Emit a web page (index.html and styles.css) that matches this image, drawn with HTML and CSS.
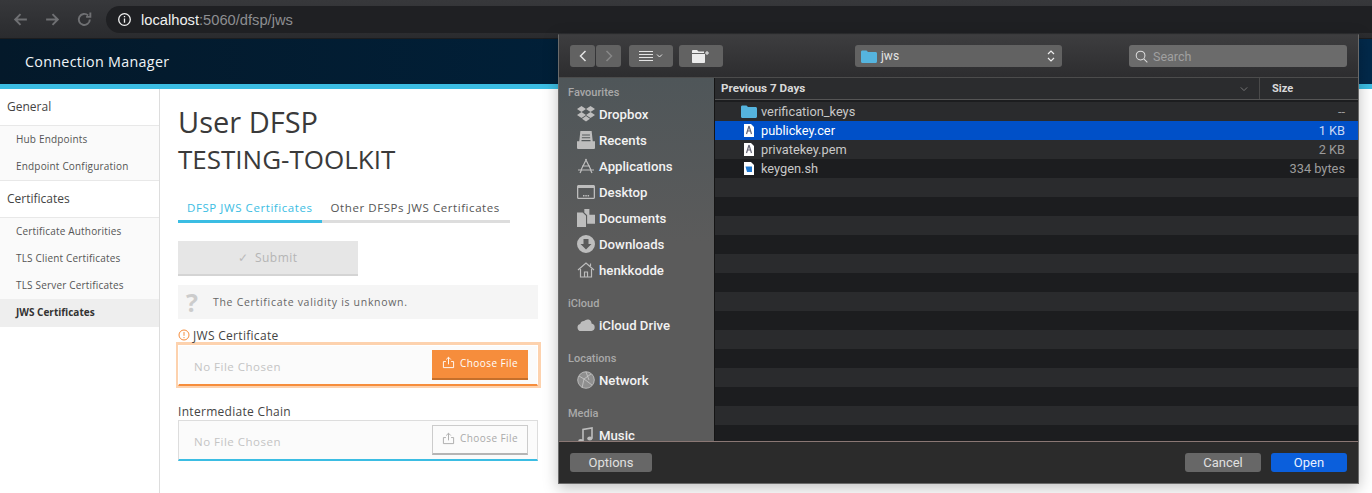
FILE: index.html
```html
<!DOCTYPE html>
<html lang="en">
<head>
    <meta charset="UTF-8">
    <title>Connection Manager</title>
    <link rel="stylesheet" href="styles.css">
</head>
<body>

    <!-- browser toolbar -->
    <div class="browser-bar">
        <div class="nav-icons">
            <svg viewBox="0 0 16 16" class="nav-icon"><path d="M14 8H3M8 3L3 8l5 5"/></svg>
            <svg viewBox="0 0 16 16" class="nav-icon"><path d="M2 8h11M8 3l5 5-5 5"/></svg>
            <svg viewBox="0 0 16 16" class="nav-icon"><path d="M13 8a5.2 5.2 0 1 1-1.6-3.8M13.500 1.500v4h-4"/></svg>
        </div>
        <div class="omnibox">
            <svg viewBox="0 0 16 16" class="info-icon"><circle cx="8" cy="8" r="6.200"/><path d="M8 7v4.500M8 4.200v1.500"/></svg>
            <span class="url-host">localhost</span><span class="url-rest">:5060/dfsp/jws</span>
        </div>
    </div>

    <header class="app-header">
        <span class="app-title">Connection Manager</span>
    </header>

    <div class="app-body">
        <nav class="sidebar">
            <div class="side-heading">General</div>
            <div class="side-group">
                <a class="side-link">Hub Endpoints</a>
                <a class="side-link">Endpoint Configuration</a>
            </div>
            <div class="side-heading">Certificates</div>
            <div class="side-group">
                <a class="side-link">Certificate Authorities</a>
                <a class="side-link">TLS Client Certificates</a>
                <a class="side-link">TLS Server Certificates</a>
                <a class="side-link active">JWS Certificates</a>
            </div>
        </nav>

        <main class="content">
            <h1>User DFSP</h1>
            <h2>TESTING-TOOLKIT</h2>

            <div class="tabs">
                <div class="tab active">DFSP JWS Certificates</div>
                <div class="tab">Other DFSPs JWS Certificates</div>
            </div>

            <button class="submit-btn" type="button"><span class="check">✓</span>Submit</button>

            <div class="validity">
                <span class="question">?</span>
                <span>The Certificate validity is unknown.</span>
            </div>

            <div class="field-label first">
                <svg viewBox="0 0 12 12" class="warn-icon"><circle cx="6" cy="6" r="5"/><path d="M6 3v3.800M6 8v1.200"/></svg>
                JWS Certificate
            </div>
            <div class="file-focus">
                <div class="file-box pending">
                    <span class="no-file">No File Chosen</span>
                    <button class="choose-btn primary" type="button">
                        <svg viewBox="0 0 14 14" class="upload-icon"><path d="M7 9V1.500M4.500 3.800L7 1.300l2.500 2.500M4.200 6H1.500v6.500h11V6H9.800"/></svg>
                        Choose File
                    </button>
                </div>
            </div>

            <div class="field-label second">Intermediate Chain</div>
            <div class="file-box">
                <span class="no-file">No File Chosen</span>
                <button class="choose-btn" type="button">
                    <svg viewBox="0 0 14 14" class="upload-icon"><path d="M7 9V1.500M4.500 3.800L7 1.300l2.500 2.500M4.200 6H1.500v6.500h11V6H9.800"/></svg>
                    Choose File
                </button>
            </div>
        </main>
    </div>

    <!-- macOS open dialog, sits over the page -->
    <div class="dialog">
        <div class="dlg-toolbar">
            <div class="seg">
                <div class="tool-btn back"><svg viewBox="0 0 10 14"><path d="M7.500 2L2.500 7l5 5"/></svg></div>
                <div class="tool-btn back dim"><svg viewBox="0 0 10 14"><path d="M2.500 2l5 5-5 5"/></svg></div>
            </div>
            <div class="tool-btn wide">
                <svg viewBox="0 0 24 12" class="list-glyph"><path d="M0 1.500h14M0 4.500h14M0 7.500h14M0 10.500h14M18 4.500l2.500 2.500L23 4.500"/></svg>
            </div>
            <div class="tool-btn wide">
                <svg viewBox="0 0 18 13" class="newfolder"><path d="M0 3V1.200C0 .5.500 0 1 0h4l1.500 1.500H12V3zM0 4h13v8.200c0 .4-.4.8-.8.8H.8c-.4 0-.8-.4-.8-.8z"/><path d="M15 1v4M13 3h4" class="plus"/></svg>
            </div>
            <div class="path-select">
                <svg viewBox="0 0 16 13" class="folder-glyph"><path d="M0 2C0 1 .6.500 1.500.500h4L7 2h7.500c.9 0 1.500.6 1.500 1.500V11.500c0 .9-.6 1.500-1.500 1.500h-13C.6 13 0 12.400 0 11.500z"/></svg>
                <span>jws</span>
                <svg viewBox="0 0 8 14" class="updown"><path d="M1 5l3-3 3 3M1 9l3 3 3-3"/></svg>
            </div>
            <div class="search-box">
                <svg viewBox="0 0 14 14" class="search-glyph"><circle cx="6" cy="6" r="4.700"/><path d="M9.500 9.500l3.800 3.800"/></svg>
                <span>Search</span>
            </div>
        </div>

        <div class="dlg-main">
            <aside class="dlg-side">
                <div class="place-heading top">Favourites</div>
                <div class="place">
                    <svg viewBox="0 0 18 16" class="place-icon"><path d="M4.500 0L0 3l4.500 3L9 3zM13.500 0L9 3l4.500 3L18 3zM4.500 6L0 9l4.500 3L9 9zM13.500 6L9 9l4.500 3L18 9zM9 10l-4 2.700L9 15.500l4-2.800z"/></svg>
                    Dropbox
                </div>
                <div class="place">
                    <svg viewBox="0 0 16 16" class="place-icon"><path d="M3 0h10l1 9h2v6a1 1 0 0 1-1 1H1a1 1 0 0 1-1-1V9h2zM4.500 3v1h7V3zM4.300 5.500v1h7.400v-1zM4 8v1h8V8z" fill-rule="evenodd"/></svg>
                    Recents
                </div>
                <div class="place">
                    <svg viewBox="0 0 18 16" class="place-icon line"><path d="M9.500 1L4 12M8.500 1L14 12M1 12h16M5 8h8M3 15l1.500-3M15 15l-1.500-3"/></svg>
                    Applications
                </div>
                <div class="place">
                    <svg viewBox="0 0 18 14" class="place-icon"><path d="M1.500 0h15c.8 0 1.500.7 1.500 1.500v11c0 .8-.7 1.500-1.500 1.500h-15C.7 14 0 13.300 0 12.500v-11C0 .7.700 0 1.500 0zM1.300 3v9.700h15.400V3zM6 10h1.500v1.500H6zM8.300 10h1.500v1.500H8.300zM10.600 10h1.500v1.500h-1.500z" fill-rule="evenodd"/></svg>
                    Desktop
                </div>
                <div class="place">
                    <svg viewBox="0 0 16 16" class="place-icon"><path d="M0 3h5l3 3v10H0zM6.500 0H11v5l5 0v8H9V5.500L6.500 3z"/></svg>
                    Documents
                </div>
                <div class="place">
                    <svg viewBox="0 0 18 18" class="place-icon"><path d="M9 0a9 9 0 1 1 0 18A9 9 0 0 1 9 0zM6.500 4v5H3.500L9 14.500 14.500 9h-3V4z" fill-rule="evenodd"/></svg>
                    Downloads
                </div>
                <div class="place">
                    <svg viewBox="0 0 18 16" class="place-icon line"><path d="M1 8l8-7 8 7M3.500 7v8h11V7M7.500 15v-5h3v5M13.500 4V1.500"/></svg>
                    henkkodde
                </div>
                <div class="place-heading">iCloud</div>
                <div class="place">
                    <svg viewBox="0 0 18 12" class="place-icon"><path d="M4 12a3.500 3.500 0 0 1-.8-6.900A4 4 0 0 1 7 2a5 5 0 0 1 4.500-1.500c2 .4 3 2 3 4A3.800 3.800 0 0 1 14.500 12z"/></svg>
                    iCloud Drive
                </div>
                <div class="place-heading">Locations</div>
                <div class="place">
                    <svg viewBox="0 0 18 18" class="place-icon globe"><circle cx="9" cy="9" r="8.300"/><path d="M2 5l5 3 7-5M7 8l-2 9M7 8l8 6M9 1l3 8"/></svg>
                    Network
                </div>
                <div class="place-heading">Media</div>
                <div class="place">
                    <svg viewBox="0 0 18 18" class="place-icon note"><path d="M6 15V3.500l9-1.500v10.500"/><ellipse cx="3.800" cy="15" rx="2.600" ry="2" class="note-head"/><ellipse cx="12.800" cy="12.500" rx="2.600" ry="2" class="note-head"/></svg>
                    Music
                </div>
            </aside>

            <section class="dlg-files">
                <div class="file-header">
                    <div class="col-name">
                        Previous 7 Days
                        <svg viewBox="0 0 10 6" class="sort-glyph"><path d="M1 1l4 4 4-4"/></svg>
                    </div>
                    <div class="col-size">Size</div>
                </div>
                <div class="file-rows">
                    <div class="file-row">
                        <svg viewBox="0 0 16 13" class="row-folder"><path d="M0 2C0 1 .6.500 1.500.500h4L7 2h7.500c.9 0 1.500.6 1.500 1.500V11.500c0 .9-.6 1.500-1.500 1.500h-13C.6 13 0 12.400 0 11.500z"/></svg>
                        <span class="row-name">verification_keys</span><span class="row-size">--</span>
                    </div>
                    <div class="file-row selected">
                        <svg viewBox="0 0 10 13" class="row-doc"><path d="M0 0h7l3 3v10H0z" fill="#fff"/><path d="M5 2L2.500 10M5 2l2.500 8M3 7h4" class="cert"/></svg>
                        <span class="row-name">publickey.cer</span><span class="row-size">1 KB</span>
                    </div>
                    <div class="file-row">
                        <svg viewBox="0 0 10 13" class="row-doc"><path d="M0 0h7l3 3v10H0z" fill="#fff"/><path d="M5 2L2.500 10M5 2l2.500 8M3 7h4" class="cert"/></svg>
                        <span class="row-name">privatekey.pem</span><span class="row-size">2 KB</span>
                    </div>
                    <div class="file-row">
                        <svg viewBox="0 0 10 13" class="row-doc"><path d="M0 0h7l3 3v10H0z" fill="#fff"/><path d="M1.500 4.500h6.500v5.500H3z" fill="#1f78d0"/></svg>
                        <span class="row-name">keygen.sh</span><span class="row-size">334 bytes</span>
                    </div>
                </div>
            </section>
        </div>

        <div class="dlg-footer">
            <button class="mac-btn" type="button">Options</button>
            <div class="footer-right">
                <button class="mac-btn" type="button">Cancel</button>
                <button class="mac-btn open" type="button">Open</button>
            </div>
        </div>
    </div>

</body>
</html>
```

FILE: styles.css
```css
* {
    box-sizing: border-box;
}

body {
    margin: 0;
    height: 493px;
    overflow: hidden;
    background-color: #fff;
    color: #333;
    font-family: "Open Sans", "Noto Sans", sans-serif;
    position: relative;
}

/* browser bar */
.browser-bar {
    height: 39px;
    display: flex;
    align-items: flex-start;
    padding: 6px 0 0 12px;
    background: linear-gradient(#37383b, #2a2b2e);
    border-bottom: 1px solid #1c1d1f;
}

.nav-icons {
    display: flex;
    gap: 15px;
    width: 94px;
    padding-top: 5px;
}

.nav-icon {
    width: 17px;
    height: 17px;
    fill: none;
    stroke: #6f7073;
    stroke-width: 1.800;
}

.omnibox {
    flex: 1;
    height: 27px;
    display: flex;
    align-items: center;
    padding-left: 11px;
    border-radius: 14px 0 0 14px;
    background-color: #1f2023;
    font-family: "Liberation Sans", sans-serif;
    font-size: 14.700px;
}

.info-icon {
    width: 15px;
    height: 15px;
    margin-right: 9px;
    fill: none;
    stroke: #f1f1f1;
    stroke-width: 1.400;
}

.url-host {
    color: #f0f0f0;
}

.url-rest {
    color: #8d8e91;
}

/* app header */
.app-header {
    height: 50px;
    display: flex;
    align-items: center;
    padding: 0 0 0 25px;
    background: linear-gradient(90deg, #04192a, #00213b 50%, #03294a);
    border-bottom: 5px solid #3bbde3;
}

.app-title {
    color: #f0f4f7;
    font-size: 14.300px;
    letter-spacing: 0.300px;
}

.app-body {
    display: grid;
    grid-template-columns: 160px 1fr;
    height: 404px;
}

/* left nav */
.sidebar {
    border-right: 1px solid #ddd;
    background-color: #fff;
}

.side-heading {
    height: 37px;
    padding: 0 0 2px 7px;
    display: flex;
    align-items: center;
    font-size: 12px;
    color: #444;
    border-bottom: 1px solid #e8e8e8;
}

.side-group {
    padding: 0;
    background-color: #fafafa;
    border-bottom: 1px solid #e8e8e8;
}

.side-group:last-child {
    border-bottom: none;
    padding-top: 0;
}

.side-link {
    display: flex;
    align-items: center;
    height: 27px;
    padding: 0 0 2px 16px;
    font-size: 10px;
    letter-spacing: 0.180px;
    color: #555;
}

.side-link.active {
    height: 28px;
    background-color: #eee;
    color: #333;
    font-weight: 700;
    letter-spacing: 0;
}

/* main column */
.content {
    padding: 14px 0 0 18px;
}

h1 {
    margin: 0;
    height: 37px;
    font-size: 29px;
    line-height: 37px;
    font-weight: 400;
    color: #3a3a3a;
}

h2 {
    margin: 0;
    height: 39px;
    font-size: 26px;
    line-height: 38px;
    font-weight: 400;
    color: #3a3a3a;
}

.tabs {
    display: flex;
    width: 332px;
    height: 27px;
    margin-top: 17px;
    border-bottom: 3px solid #ddd;
}

.tab {
    height: 27px;
    padding: 0 9px;
    font-size: 11.500px;
    line-height: 24px;
    letter-spacing: 0.570px;
    color: #555;
}

.tab.active {
    color: #3bbde3;
    border-bottom: 3px solid #3bbde3;
}

.submit-btn {
    display: flex;
    align-items: center;
    justify-content: center;
    width: 180px;
    height: 35px;
    margin-top: 18px;
    padding: 0;
    border: none;
    border-bottom: 2px solid #d4d4d4;
    background-color: #e6e6e6;
    color: #b5b5b5;
    font-family: inherit;
    font-size: 12px;
    letter-spacing: 0.500px;
}

.check {
    margin-right: 6px;
    color: #bbb;
}

.validity {
    display: flex;
    align-items: center;
    width: 360px;
    height: 34px;
    margin-top: 9px;
    background-color: #f5f5f5;
    font-size: 10.500px;
    letter-spacing: 0.700px;
    color: #666;
}

.question {
    width: 35px;
    padding-left: 8px;
    font-size: 25px;
    line-height: 30px;
    font-weight: 700;
    color: #ccc;
}

.field-label {
    display: flex;
    align-items: center;
    height: 16px;
    font-size: 12px;
    letter-spacing: 0.300px;
    color: #444;
}

.field-label.first {
    margin-top: 8px;
}

.field-label.second {
    margin-top: 15px;
    margin-bottom: 1px;
}

.warn-icon {
    width: 12px;
    height: 12px;
    margin-right: 3px;
    fill: none;
    stroke: #f68d3c;
    stroke-width: 1;
}

.file-focus {
    width: 365px;
    height: 46px;
    margin: -1px 0 0 -2px;
    padding: 3px 3px 2px 2px;
    background-color: #fdd2ae;
}

.file-box {
    width: 360px;
    height: 41px;
    display: flex;
    align-items: center;
    justify-content: space-between;
    padding: 0 9px 0 15px;
    background-color: #fbfbfb;
    border: 1px solid #ddd;
    border-bottom: 2px solid #3bbde3;
}

.file-box.pending {
    border-color: #fff;
    border-bottom-color: #f68d3c;
}

.no-file {
    font-size: 11.500px;
    letter-spacing: 0.500px;
    color: #c4c4c4;
    padding-top: 3px;
}

.choose-btn {
    display: flex;
    align-items: center;
    justify-content: center;
    gap: 5px;
    width: 96px;
    height: 30px;
    margin-top: -1px;
    padding: 0 0 2px;
    background-color: #fbfbfb;
    border: 1px solid #ccc;
    border-bottom: 2px solid #b5b5b5;
    color: #aaa;
    font-family: inherit;
    font-size: 10px;
    letter-spacing: 0.420px;
}

.choose-btn.primary {
    background-color: #f68d3c;
    border: none;
    border-bottom: 2px solid #c56f2b;
    color: #fff;
}

.upload-icon {
    width: 13px;
    height: 13px;
    fill: none;
    stroke: currentColor;
    stroke-width: 1;
}

/* file dialog */
.dialog {
    position: absolute;
    left: 558px;
    top: 34px;
    width: 801px;
    height: 450px;
    display: flex;
    flex-direction: column;
    border: 1px solid #6a6a6a;
    border-top-color: #3a3a3c;
    background-color: #2b2b2b;
    box-shadow: 0 4px 14px rgba(0, 0, 0, 0.25);
    font-family: "Roboto", "Liberation Sans", sans-serif;
}

.dlg-toolbar {
    height: 43px;
    display: flex;
    align-items: center;
    flex-shrink: 0;
    padding: 0 11px;
    background: linear-gradient(#3d3d3f, #2d2d2f);
    border-bottom: 1px solid #4c4c4c;
}

.seg {
    display: flex;
    gap: 1px;
    margin-right: 8px;
}

.tool-btn {
    display: flex;
    align-items: center;
    justify-content: center;
    height: 22px;
    border-radius: 3px;
    background-color: #626262;
}

.tool-btn.back {
    width: 25px;
}

.tool-btn.back svg {
    width: 10px;
    height: 14px;
    fill: none;
    stroke: #e4e4e4;
    stroke-width: 1.500;
}

.tool-btn.dim svg {
    stroke: #888;
}

.tool-btn.wide {
    width: 44px;
    margin-right: 6px;
}

.list-glyph {
    width: 24px;
    height: 12px;
    fill: none;
    stroke: #e4e4e4;
    stroke-width: 1;
}

.newfolder {
    width: 18px;
    height: 13px;
    fill: #ececec;
}

.newfolder .plus {
    fill: none;
    stroke: #ececec;
}

.path-select {
    display: flex;
    align-items: center;
    width: 207px;
    height: 22px;
    margin-left: 126px;
    padding: 0 7px 0 6px;
    border-radius: 3px;
    background-color: #626262;
    color: #e4e4e4;
    font-size: 12px;
}

.folder-glyph {
    width: 16px;
    height: 13px;
    margin-right: 4px;
    fill: #55b4de;
}

.updown {
    width: 8px;
    height: 14px;
    margin-left: auto;
    fill: none;
    stroke: #eee;
    stroke-width: 1.200;
}

.search-box {
    display: flex;
    align-items: center;
    width: 218px;
    height: 22px;
    margin-left: 67px;
    padding-left: 6px;
    border-radius: 3px;
    background-color: #6b6b6b;
    color: #a0a0a0;
    font-size: 12.500px;
}

.search-glyph {
    width: 13px;
    height: 13px;
    margin-right: 5px;
    fill: none;
    stroke: #ddd;
    stroke-width: 1.100;
}

.dlg-main {
    flex: 1;
    display: flex;
    min-height: 0;
    overflow: hidden;
}

.dlg-side {
    width: 156px;
    flex-shrink: 0;
    overflow: hidden;
    padding-left: 9px;
    background: linear-gradient(#4f5659, #5b5b5b 45%);
    border-right: 1px solid #151515;
}

.place-heading {
    height: 16px;
    margin-top: 13px;
    font-size: 11px;
    line-height: 16px;
    font-weight: 500;
    color: #a9a9a9;
}

.place-heading.top {
    margin-top: 7px;
}

.place {
    display: flex;
    align-items: center;
    height: 26px;
    padding-left: 9px;
    font-size: 13.200px;
    font-weight: 500;
    color: #f2f2f2;
}

.place-icon {
    width: 18px;
    height: 18px;
    margin-right: 4px;
    flex-shrink: 0;
    fill: #bdbdbd;
}

.place-icon.line {
    fill: none;
    stroke: #bdbdbd;
    stroke-width: 1.200;
}

.place-icon.globe {
    fill: #8f8f8f;
    stroke: #c9c9c9;
    stroke-width: 0.800;
}

.place-icon.note {
    fill: none;
    stroke: #bdbdbd;
    stroke-width: 1.600;
}

.note-head {
    fill: #bdbdbd;
    stroke: none;
}

.dlg-files {
    flex: 1;
    min-width: 0;
    background-color: #1c1d1f;
}

.file-header {
    display: flex;
    height: 22px;
    background-color: #2b2c2e;
    border-bottom: 1px solid #555;
    color: #d9d9d9;
    font-size: 11.700px;
    font-weight: 700;
    line-height: 21px;
}

.col-name {
    display: flex;
    align-items: center;
    justify-content: space-between;
    width: 545px;
    padding: 0 11px 0 6px;
    border-right: 1px solid #4a4a4a;
}

.sort-glyph {
    width: 8px;
    height: 6px;
    fill: none;
    stroke: #888;
}

.col-size {
    padding-left: 12px;
    font-size: 11px;
}

/* striped rows, 19px each */
.file-rows {
    height: 342px;
    padding-top: 2px;
    background: repeating-linear-gradient(#1c1d1f 0 2px, #2a2b2d 2px 21px, #1c1d1f 21px 38px);
}

.file-row {
    display: flex;
    align-items: center;
    height: 19px;
    color: #c8c8c8;
    font-size: 12.800px;
}

.file-row.selected {
    background-color: #0050c8;
    color: #fff;
}

.row-folder {
    width: 16px;
    height: 13px;
    margin-left: 26px;
    margin-right: 4px;
    fill: #55b4de;
}

.row-doc {
    width: 10px;
    height: 13px;
    margin-left: 29px;
    margin-right: 7px;
}

.cert {
    fill: none;
    stroke: #667;
    stroke-width: 1.200;
}

.row-name {
    flex: 1;
}

.row-size {
    padding-right: 13px;
    color: #9c9c9c;
}

.selected .row-size {
    color: #c8d8f4;
}

.dlg-footer {
    height: 42px;
    flex-shrink: 0;
    display: flex;
    align-items: center;
    justify-content: space-between;
    padding: 0 11px;
    background-color: #2b2b2b;
    border-top: 1px solid #8a7774;
}

.footer-right {
    display: flex;
    gap: 10px;
}

.mac-btn {
    width: 82px;
    height: 19px;
    padding: 0;
    border: none;
    border-radius: 3px;
    background-color: #676767;
    color: #e0e0e0;
    font-family: inherit;
    font-size: 13px;
}

.mac-btn.open {
    width: 76px;
    background-color: #0b5fdc;
    color: #e8f0ff;
}

.footer-right .mac-btn:first-child {
    width: 76px;
}
```
